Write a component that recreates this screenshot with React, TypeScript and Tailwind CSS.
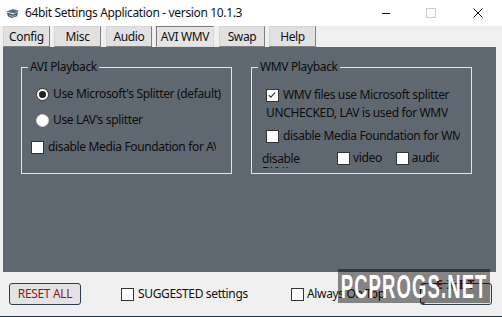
import React from "react";

const font = { fontFamily: '"Noto Sans", "Segoe UI", sans-serif' };

function CheckBox({ checked = false }: { checked?: boolean }) {
  return (
    <span className="relative inline-block w-[13px] h-[13px] shrink-0 bg-white border border-[#333333]">
      {checked && (
        <svg viewBox="0 0 13 13" className="absolute left-0 top-0 w-[11px] h-[11px]">
          <path d="M2 6 L4.5 8.5 L9.5 3" stroke="#333" strokeWidth="1.3" fill="none" />
        </svg>
      )}
    </span>
  );
}

function Radio({ checked = false }: { checked?: boolean }) {
  return (
    <span
      className={
        "flex items-center justify-center w-[13px] h-[13px] shrink-0 rounded-full bg-white border " +
        (checked ? "border-[#333333]" : "border-[#d0d0d0]")
      }
    >
      {checked && <span className="w-[7px] h-[7px] rounded-full bg-[#222222]" />}
    </span>
  );
}

function TabBtn({ label, w, active = false }: { label: string; w: string; active?: boolean }) {
  return (
    <div
      className={
        "h-[21px] flex items-center justify-center text-[12px] text-[#111] " +
        w +
        (active
          ? " bg-[#e5e5e5] border border-t-[#7a7a7a] border-l-[#7a7a7a] border-r-[#d8d8d8] border-b-[#d8d8d8]"
          : " bg-[#e1e1e1] border border-t-[#d4d4d4] border-l-[#d4d4d4] border-r-[#7f7f7f] border-b-[#7f7f7f]")
      }
    >
      {label}
    </div>
  );
}

export default function App() {
  return (
    <div className="relative w-[502px] h-[317px] overflow-hidden bg-[#f0f0f0] flex flex-col tracking-[-0.35px]" style={font}>
      {/* Title bar */}
      <div className="h-[26px] bg-white flex items-center shrink-0">
        <svg viewBox="0 0 16 12" className="ml-[5px] w-[15px] h-[11px] mt-[1px]">
          <path d="M1 4 L8 1 L15 3 L10 6 Z" fill="#5a6f80" />
          <path d="M2 5 L9 7 L14 4 L13 9 L7 11 L3 9 Z" fill="#3f5566" />
          <path d="M4 7 L9 8.5 L12 7 L12 8.5 L8 10 L4 8.5 Z" fill="#8fa6b8" />
        </svg>
        <span className="ml-[5px] text-[12px] text-[#111]">64bit Settings Application - version 10.1.3</span>
        <div className="flex-1" />
        <div className="w-[8px] h-[1px] bg-[#111] mr-[36px]" />
        <div className="w-[10px] h-[10px] border border-[#cccccc] mr-[37px]" />
        <svg viewBox="0 0 10 10" className="w-[10px] h-[10px] mr-[19px]">
          <path d="M0.5 0.5 L9.5 9.5 M9.5 0.5 L0.5 9.5" stroke="#111" strokeWidth="1" />
        </svg>
      </div>

      {/* Tabs */}
      <div className="h-[21px] flex items-center shrink-0 pl-[3px]">
        <TabBtn label="Config" w="w-[47px]" />
        <div className="w-[4px]" />
        <TabBtn label="Misc" w="w-[47px]" />
        <div className="w-[5px]" />
        <TabBtn label="Audio" w="w-[46px]" />
        <div className="w-[4px]" />
        <TabBtn label="AVI WMV" w="w-[58px]" active />
        <div className="w-[5px]" />
        <TabBtn label="Swap" w="w-[46px]" />
        <div className="w-[4px]" />
        <TabBtn label="Help" w="w-[47px]" />
      </div>

      {/* Main panel */}
      <div className="h-[225px] shrink-0 mx-[3px] mr-[6px] bg-[#5f6771] flex items-start pt-[12px] pl-[18px] gap-[19px] text-[12px] text-[#0d0d0d]">
        <fieldset className="w-[211px] h-[115px] border border-[#e4e4e4] px-[6px] m-0">
          <legend className="px-[2px] leading-[16px]">AVI Playback</legend>
          <div className="flex flex-col">
            <div className="flex items-center h-[14px] mt-[12px] ml-[8px] gap-[4px]">
              <Radio checked />
              <span className="whitespace-nowrap">Use Microsoft's Splitter (default)</span>
            </div>
            <div className="flex items-center h-[14px] mt-[12px] ml-[8px] gap-[4px]">
              <Radio />
              <span className="whitespace-nowrap">Use LAV's splitter</span>
            </div>
            <div className="flex items-center h-[14px] mt-[13px] ml-[3px] gap-[4px]">
              <CheckBox />
              <span className="w-[168px] overflow-hidden whitespace-nowrap">disable Media Foundation for AVI</span>
            </div>
          </div>
        </fieldset>

        <fieldset className="w-[221px] h-[115px] border border-[#e4e4e4] px-[6px] m-0">
          <legend className="px-[2px] leading-[16px]">WMV Playback</legend>
          <div className="flex flex-col">
            <div className="flex items-center h-[14px] mt-[13px] ml-[8px] gap-[4px]">
              <CheckBox checked />
              <span className="whitespace-nowrap">WMV files use Microsoft splitter</span>
            </div>
            <div className="h-[14px] mt-[4px] ml-[8px] leading-[14px] whitespace-nowrap">UNCHECKED, LAV is used for WMV</div>
            <div className="flex items-center h-[14px] mt-[9px] ml-[8px] gap-[4px]">
              <CheckBox />
              <span className="w-[177px] overflow-hidden whitespace-nowrap">disable Media Foundation for WMV</span>
            </div>
            <div className="flex items-start mt-[8px] ml-[4px] h-[18px]">
              <div className="w-[75px] h-[17px] overflow-hidden leading-[13px] pt-[1px]">
                <div className="w-[50px]">disable DXVA</div>
              </div>
              <div className="flex items-center gap-[3px] h-[14px]">
                <CheckBox />
                <span>video</span>
              </div>
              <div className="flex items-center gap-[3px] h-[14px] ml-[14px]">
                <CheckBox />
                <span className="w-[27px] overflow-hidden whitespace-nowrap">audio</span>
              </div>
            </div>
          </div>
        </fieldset>
      </div>

      {/* Bottom bar */}
      <div className="flex-1 flex items-center pl-[9px] text-[12px] text-[#111] border-b border-[#1e3040]">
        <div className="w-[72px] h-[22px] shrink-0 rounded-[3px] border border-[#2a3f55] bg-[#e3e3e3] flex items-center justify-center text-[#8b1a1a]">
          RESET ALL
        </div>
        <div className="w-[170px] shrink-0 flex items-center gap-[4px] ml-[40px]">
          <CheckBox />
          <span className="whitespace-nowrap">SUGGESTED settings</span>
        </div>
        <div className="flex items-center gap-[3px]">
          <CheckBox />
          <span className="whitespace-nowrap">Always On Top</span>
        </div>
        <div className="flex-1" />
        <div className="w-[72px] h-[22px] shrink-0 mr-[10px] rounded-[3px] border border-[#2a3f55] bg-[#e3e3e3] flex items-center justify-center text-[#8b1a1a] font-bold tracking-[4px]">
          - EXIT -
        </div>
      </div>

      {/* Watermark */}
      <div className="absolute left-[338px] top-[269px] w-[152px] h-[34px] bg-black/45 flex items-center justify-center overflow-hidden">
        <span
          className="text-white font-bold text-[33px] leading-none tracking-[2px] inline-block whitespace-nowrap scale-x-[0.56] shrink-0"
          style={{ fontFamily: '"Liberation Sans", sans-serif' }}
        >
          PCPROGS.NET
        </span>
      </div>
    </div>
  );
}
